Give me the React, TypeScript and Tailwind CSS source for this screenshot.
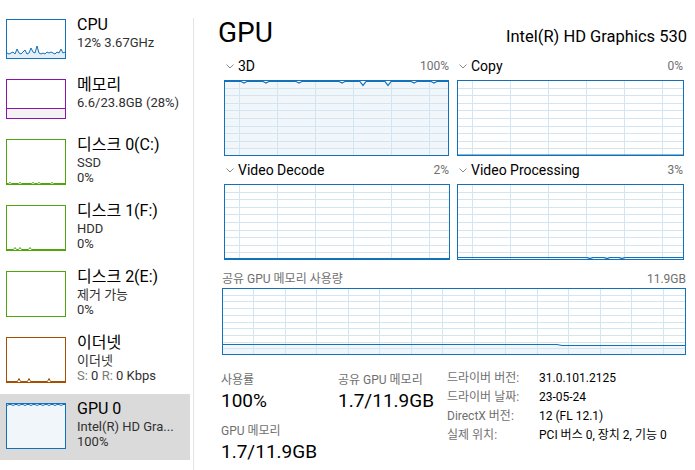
import React from 'react';

const BLUE = '#1171bb';
const GRID = '#d3e5f1';
const FILL = '#f1f6fa';

type Pt = [number, number];

function toPts(pts: Pt[]) {
  return pts.map(([x, y]) => `${x},${y}`).join(' ');
}

function Graph({
  w,
  h,
  step,
  offset,
  rows,
  line,
  color = BLUE,
}: {
  w: number;
  h: number;
  step: number;
  offset: number;
  rows: number;
  line: Pt[];
  color?: string;
}) {
  const cols: number[] = [];
  for (let x = offset; x < w; x += step) cols.push(Math.round(x));
  const hs: number[] = [];
  for (let i = 1; i < rows; i++) hs.push((h / rows) * i);
  const area: Pt[] = [[line[0][0], h], ...line, [line[line.length - 1][0], h]];
  return (
    <svg width={w} height={h} viewBox={`0 0 ${w} ${h}`} className="block">
      <polygon points={toPts(area)} fill={FILL} />
      {cols.map((x) => (
        <line key={'c' + x} x1={x + 0.5} y1={0} x2={x + 0.5} y2={h} stroke={GRID} strokeWidth={1} />
      ))}
      {hs.map((y) => (
        <line key={'r' + y} x1={0} y1={Math.round(y) + 0.5} x2={w} y2={Math.round(y) + 0.5} stroke={GRID} strokeWidth={1} />
      ))}
      <polyline points={toPts(line)} fill="none" stroke={color} strokeWidth={1.2} />
      <rect x={0.5} y={0.5} width={w - 1} height={h - 1} fill="none" stroke={color} strokeWidth={1} />
    </svg>
  );
}

function flat(w: number, y: number, bumps: { x: number; dy: number }[] = []): Pt[] {
  const pts: Pt[] = [];
  for (let x = 1; x <= w - 1; x += 1) {
    let yy = y;
    for (const b of bumps) {
      const d = Math.abs(x - b.x);
      if (d < 3) yy = y + b.dy * (1 - d / 3);
    }
    pts.push([x, yy]);
  }
  return pts;
}

function Thumb({
  h,
  color,
  line,
  fill,
  full,
}: {
  h: number;
  color: string;
  line?: Pt[];
  fill?: string;
  full?: boolean;
}) {
  const area: Pt[] | null = line && fill ? [[1, h], ...line, [59, h]] : null;
  return (
    <svg width={60} height={h} viewBox={`0 0 60 ${h}`} className="block shrink-0">
      <rect x={0} y={0} width={60} height={h} fill={full ? FILL : '#ffffff'} />
      {area && <polygon points={toPts(area)} fill={fill} />}
      {line && <polyline points={toPts(line)} fill="none" stroke={color} strokeWidth={1} />}
      <rect x={0.5} y={0.5} width={59} height={h - 1} fill="none" stroke={color} strokeWidth={1} />
    </svg>
  );
}

const cpuY = [34, 35, 34, 33, 35, 30, 34, 35, 33, 31, 35, 34, 29, 33, 34, 27, 34, 35, 34, 35, 33, 34, 33, 34, 35, 33, 34, 30, 34, 33];
const cpuLine: Pt[] = cpuY.map((y, i) => [1 + i * 2, y]);

function spikes(h: number, xs: number[], tall = 2): Pt[] {
  const pts: Pt[] = [[1, h - 1.5]];
  for (const x of xs) {
    pts.push([x - 1.5, h - 1.5], [x, h - 1.5 - tall], [x + 1.5, h - 1.5]);
  }
  pts.push([59, h - 1.5]);
  return pts;
}

const gpuThumbLine: Pt[] = Array.from({ length: 30 }, (_, i) => [1 + i * 2, i % 3 === 0 ? 2.5 : 1.5] as Pt);

type Side = {
  title: string;
  lines: React.ReactNode[];
  thumb: React.ReactNode;
  selected?: boolean;
};

const items: Side[] = [
  { title: 'CPU', lines: ['12% 3.67GHz'], thumb: <Thumb h={40} color={BLUE} line={cpuLine} fill="#e3eef7" /> },
  {
    title: '메모리',
    lines: ['6.6/23.8GB (28%)'],
    thumb: <Thumb h={40} color="#8b12ae" line={[[1, 29.5], [59, 29.5]]} fill="#f4f2f5" />,
  },
  { title: '디스크 0(C:)', lines: ['SSD', '0%'], thumb: <Thumb h={46} color="#4da60c" line={spikes(46, [4, 14, 27, 33, 46], 1)} /> },
  { title: '디스크 1(F:)', lines: ['HDD', '0%'], thumb: <Thumb h={46} color="#4da60c" line={spikes(46, [9, 14, 24], 2)} /> },
  { title: '디스크 2(E:)', lines: ['제거 가능', '0%'], thumb: <Thumb h={46} color="#4da60c" /> },
  {
    title: '이더넷',
    lines: [
      '이더넷',
      <span key="e">
        <span className="text-[#7a7a7a]">S:</span> 0 <span className="text-[#7a7a7a]">R:</span> 0 Kbps
      </span>,
    ],
    thumb: <Thumb h={46} color="#a74f01" line={spikes(46, [13, 23, 43], 3)} />,
  },
  {
    title: 'GPU 0',
    lines: ['Intel(R) HD Gra...', '100%'],
    thumb: <Thumb h={46} color={BLUE} line={gpuThumbLine} full />,
    selected: true,
  },
];

function Chevron() {
  return (
    <svg width={8} height={5} viewBox="0 0 8 5" className="shrink-0">
      <polyline points="0.5,0.5 4,4 7.5,0.5" fill="none" stroke="#8a8a8a" strokeWidth={1} />
    </svg>
  );
}

function ChartBox({ title, pct, w, line }: { title: string; pct: string; w: number; line: Pt[] }) {
  return (
    <div className="flex flex-col">
      <div className="flex h-[24px] items-start justify-between pr-[1px]">
        <div className="flex h-[21px] items-center gap-[4px] pl-[2px]">
          <Chevron />
          <span className="text-[14px] leading-[21px] text-black">{title}</span>
        </div>
        <span className="text-[12px] leading-[21px] text-[#6f6f6f]">{pct}</span>
      </div>
      <Graph w={w} h={76} step={38} offset={15} rows={10} line={line} />
    </div>
  );
}

const line3d: Pt[] = flat(225, 1.5, [
  { x: 20, dy: 1.5 },
  { x: 42, dy: 1.5 },
  { x: 75, dy: 1.5 },
  { x: 118, dy: 1.5 },
  { x: 139, dy: 4 },
  { x: 164, dy: 4 },
  { x: 190, dy: 1.5 },
  { x: 210, dy: 1.5 },
]);
const lineDecode: Pt[] = flat(226, 74.5);
const lineProc: Pt[] = flat(227, 73.5, [
  { x: 133, dy: 1 },
  { x: 150, dy: 1 },
  { x: 165, dy: 1 },
]);
const lineMem: Pt[] = [
  [1, 56.5],
  [110, 56.5],
  [335, 56.5],
  [340, 57.5],
  [463, 57.5],
];

const details: [string, string][] = [
  ['드라이버 버전:', '31.0.101.2125'],
  ['드라이버 날짜:', '23-05-24'],
  ['DirectX 버전:', '12 (FL 12.1)'],
  ['실제 위치:', 'PCI 버스 0, 장치 2, 기능 0'],
];

export default function App() {
  return (
    <div className="flex h-[470px] w-[695px] overflow-hidden bg-white font-['Roboto','Noto_Sans_CJK_KR',sans-serif] text-black">
      {/* left list */}
      <div className="flex w-[190px] shrink-0 flex-col pt-[10px]">
        {items.map((it) => (
          <div
            key={it.title}
            className={`flex gap-[11px] pl-[6px] pt-[9px] ${it.lines.length > 1 ? 'h-[66px]' : 'h-[60px]'} ${it.selected ? 'bg-[#dadada]' : ''}`}
          >
            {it.thumb}
            <div className="-mt-[5px] flex flex-col">
              <span className="whitespace-nowrap text-[16px] leading-[21px] text-black">{it.title}</span>
              {it.lines.map((l, i) => (
                <span key={i} className="whitespace-nowrap text-[13px] leading-[15px] text-[#303030]">
                  {l}
                </span>
              ))}
            </div>
          </div>
        ))}
      </div>
      <div className="w-[3px] shrink-0" />
      <div className="mt-[18px] w-px shrink-0 bg-[#e3e3e3]" />

      {/* main */}
      <div className="flex flex-1 flex-col pl-[24px] pr-[8px]">
        <div className="mt-[16px] flex items-baseline justify-between">
          <span className="text-[28px] leading-[34px]">GPU</span>
          <span className="text-[16.5px] leading-[20px]">Intel(R) HD Graphics 530</span>
        </div>

        <div className="mt-[6px] ml-[6px] grid grid-cols-[226px_227px] gap-x-[7px] gap-y-[4px]">
          <ChartBox title="3D" pct="100%" w={225} line={line3d} />
          <ChartBox title="Copy" pct="0%" w={227} line={[[1, 75], [226, 75]]} />
          <ChartBox title="Video Decode" pct="2%" w={226} line={lineDecode} />
          <ChartBox title="Video Processing" pct="3%" w={227} line={lineProc} />
        </div>

        <div className="ml-[4px] mt-[11px] flex w-[464px] flex-col">
          <div className="flex justify-between text-[12px] leading-[16px] text-[#6f6f6f]">
            <span>공유 GPU 메모리 사용량</span>
            <span>11.9GB</span>
          </div>
          <div className="mt-[1px]">
            <Graph w={464} h={67} step={31.5} offset={31} rows={10} line={lineMem} />
          </div>
        </div>

        <div className="ml-[3px] flex">
          <div className="flex w-[117px] flex-col pt-[17px]">
            <span className="text-[12px] leading-[16px] text-[#6f6f6f]">사용률</span>
            <span className="text-[19px] leading-[26px]">100%</span>
            <span className="mt-[9px] text-[12px] leading-[16px] text-[#6f6f6f]">GPU 메모리</span>
            <span className="text-[19px] leading-[26px]">1.7/11.9GB</span>
          </div>
          <div className="flex w-[109px] flex-col pt-[17px]">
            <span className="whitespace-nowrap text-[12px] leading-[16px] text-[#6f6f6f]">공유 GPU 메모리</span>
            <span className="whitespace-nowrap text-[19px] leading-[26px]">1.7/11.9GB</span>
          </div>
          <div className="flex flex-col pt-[13px]">
            {details.map(([k, v]) => (
              <div key={k} className="flex h-[19px] items-center">
                <span className="w-[92px] shrink-0 whitespace-nowrap text-[12px] text-[#6f6f6f]">{k}</span>
                <span className="whitespace-nowrap text-[12px]">{v}</span>
              </div>
            ))}
          </div>
        </div>
      </div>
    </div>
  );
}
